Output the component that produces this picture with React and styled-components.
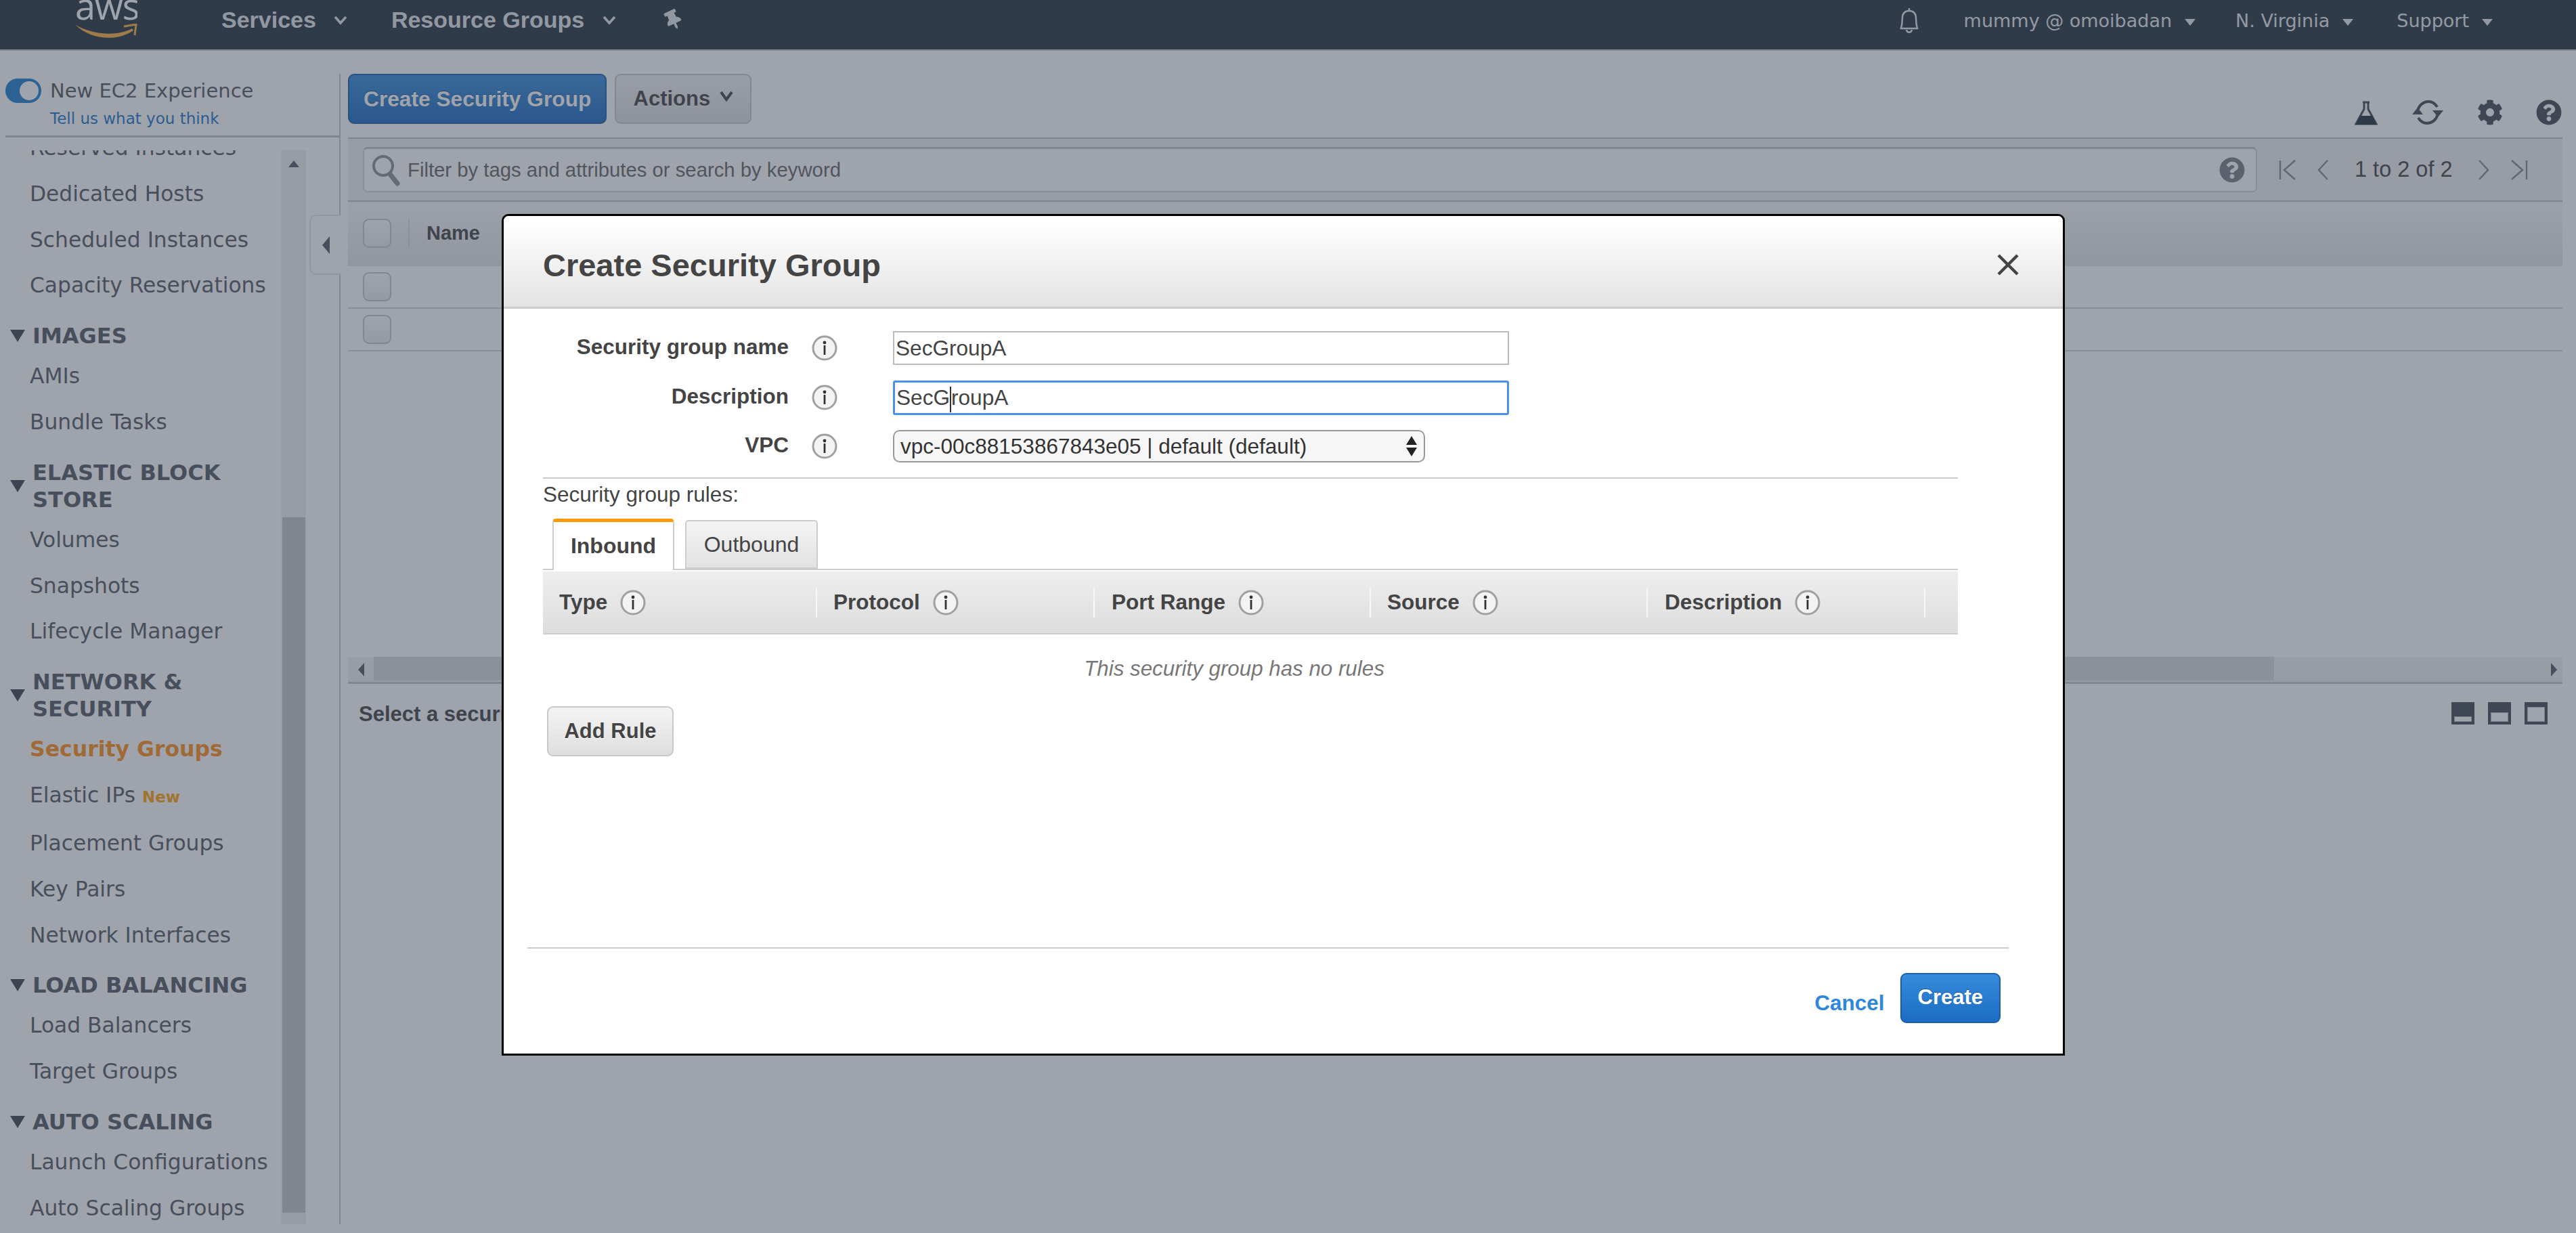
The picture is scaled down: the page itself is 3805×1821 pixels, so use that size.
import React from "react";
import styled, { createGlobalStyle } from "styled-components";
import { FaCog, FaQuestionCircle, FaThumbtack } from "react-icons/fa";

const GlobalStyle = createGlobalStyle`
html, body {
    margin : 0;
    padding : 0;
    background : #fff;
    overflow : hidden;
}
* { box-sizing : border-box; }
`;

const Page = styled.div`
    position : relative;
    width : 3805px;
    height : 1821px;
    overflow : hidden;
    font-family : "Liberation Sans", Arial, sans-serif;
    color : #444;
`;

/* top bar */
const TopBar = styled.header`
    display : flex;
    align-items : center;
    height : 75px;
    background : #263342;
    border-bottom : 2px solid #c9ccd0;
    color : #d5dbdb;
`;
const Logo = styled.div`
    display : flex;
    flex-direction : column;
    flex : none;
    width : 92px;
    height : 73px;
    margin-left : 111px;
    overflow : hidden;
`;
const LogoText = styled.span`
    display : block;
    flex : none;
    height : 70px;
    margin-top : -27px;
    margin-bottom : -8px;
    padding-right : 6px;
    font-family : "Open Sans", sans-serif;
    font-size : 54px;
    line-height : 70px;
    text-align : center;
    letter-spacing : -1px;
    color : #fff;
`;
const Smile = styled.svg`
    display : block;
    flex : none;
    width : 92px;
    height : 22px;
`;
const MainNav = styled.nav`
    display : flex;
    align-items : center;
    margin-left : 124px;
    margin-top : -14px;
`;
const MainNavItem = styled.a`
    display : flex;
    align-items : center;
    gap : ${(p) => p.$inner}px;
    margin-right : ${(p) => p.$gap}px;
    font-size : 34px;
    font-weight : bold;
    color : #e6e9ec;
`;
const PinWrap = styled.span`
    display : flex;
    color : #e6e9ec;
    font-size : 29px;
    transform : rotate(-25deg);
`;
const TopRight = styled.div`
    display : flex;
    align-items : center;
    margin-left : auto;
    margin-right : 123px;
    margin-top : -12px;
`;
const Bell = styled.svg`
    width : 36px;
    height : 40px;
    margin-right : 63px;
`;
const RightItem = styled.a`
    display : flex;
    align-items : center;
    gap : 19px;
    margin-right : ${(p) => p.$gap}px;
    font-family : "DejaVu Sans", sans-serif;
    font-size : 27px;
    color : #e8ebee;
`;
const Caret = styled.span`
    width : 0;
    height : 0;
    border-left : 8px solid transparent;
    border-right : 8px solid transparent;
    border-top : 10px solid #e8ebee;
    margin-top : 4px;
`;

/* page body */
const Body = styled.div`
    display : flex;
    height : 1733px;
`;
const SideBar = styled.aside`
    position : relative;
    flex : none;
    width : 503px;
    margin-top : 34px;
    border-right : 2px solid #c5c8cd;
    display : flex;
    flex-direction : column;
`;
const ToggleBlock = styled.div`
    height : 94px;
    margin-left : 8px;
    border-bottom : 3px solid #c5c8cd;
`;
const ToggleRow = styled.div`
    display : flex;
    align-items : center;
    gap : 13px;
    height : 50px;
    font-family : "DejaVu Sans", sans-serif;
    font-size : 29px;
    color : #545b64;
`;
const Toggle = styled.span`
    display : block;
    width : 53px;
    height : 36px;
    border-radius : 18px;
    background : #1e7fd0;
    position : relative;
    &::after {
        content : "";
        position : absolute;
        right : 4px;
        top : 4px;
        width : 28px;
        height : 28px;
        border-radius : 50%;
        background : #fff;
    }
`;
const ToggleLink = styled.a`
    display : block;
    margin-left : 66px;
    font-family : "DejaVu Sans", sans-serif;
    font-size : 23px;
    line-height : 32px;
    color : #1a77c9;
`;
const NavArea = styled.div`
    display : flex;
    flex : 1;
    min-height : 0;
    margin-top : 19px;
`;
const NavList = styled.div`
    width : 415px;
    overflow : hidden;
`;
const NavScroll = styled.div`
    margin-top : -38px;
`;
const NavItem = styled.a`
    display : flex;
    align-items : baseline;
    height : ${(p) => p.$h || 67.8}px;
    padding-left : 44px;
    line-height : 68px;
    font-family : "DejaVu Sans", sans-serif;
    font-size : ${(p) => (p.$active ? 31.5 : 31.3)}px;
    font-weight : ${(p) => (p.$active ? "bold" : "normal")};
    color : ${(p) => (p.$active ? "#ff8f1b" : "#545b64")};
`;
const NewTag = styled.span`
    margin-left : 10px;
    font-size : 23px;
    font-weight : bold;
    color : #ffa50a;
`;
const NavHead = styled.div`
    display : flex;
    align-items : center;
    gap : 11px;
    margin-top : 21px;
    margin-bottom : 5px;
    padding-left : 15px;
    font-family : "DejaVu Sans", sans-serif;
    font-size : 32px;
    font-weight : bold;
    line-height : 40px;
    color : #545b64;
`;
const HeadArrow = styled.span`
    flex : none;
    width : 0;
    height : 0;
    border-left : 11px solid transparent;
    border-right : 11px solid transparent;
    border-top : 18px solid #3d4652;
`;
const ScrollTrack = styled.div`
    position : relative;
    width : 37px;
    background : #eef3f2;
`;
const ScrollThumb = styled.div`
    position : absolute;
    left : 2px;
    right : 1px;
    top : 542px;
    bottom : 17px;
    background : #c3c7cb;
`;
const ScrollUp = styled.span`
    position : absolute;
    left : 11px;
    top : 15px;
    width : 0;
    height : 0;
    border-left : 8px solid transparent;
    border-right : 8px solid transparent;
    border-bottom : 10px solid #545b64;
`;
const Collapser = styled.div`
    position : absolute;
    right : -2px;
    top : 208px;
    display : flex;
    align-items : center;
    justify-content : center;
    width : 46px;
    height : 89px;
    background : #fff;
    border : 2px solid #e3e5e8;
    border-right : none;
    border-radius : 10px 0 0 10px;
`;
const CollapseArrow = styled.span`
    width : 0;
    height : 0;
    border-top : 13px solid transparent;
    border-bottom : 13px solid transparent;
    border-right : 11px solid #545b64;
`;

/* main content */
const Main = styled.main`
    flex : none;
    width : 3271px;
    margin-left : 11px;
`;
const ActionBar = styled.div`
    display : flex;
    align-items : flex-start;
    gap : 12px;
    height : 130px;
    padding-top : 34px;
    border-bottom : 2px solid #bfc3c8;
`;
const PrimaryButton = styled.button`
    height : 74px;
    padding : 0 ${(p) => p.$pad}px ${(p) => p.$bottom || 0}px;
    border : 2px solid #1a5fae;
    border-radius : 9px;
    background : linear-gradient(#378cdc, #1b6cc3);
    color : #fff;
    font-family : inherit;
    font-size : ${(p) => p.$size}px;
    font-weight : bold;
    text-shadow : 0 -1px 0 #14508f;
`;
const GreyButton = styled.button`
    display : inline-flex;
    align-items : center;
    gap : 14px;
    height : 74px;
    width : ${(p) => p.$w}px;
    padding : 0;
    justify-content : center;
    border : 2px solid #c9c9c9;
    border-radius : 9px;
    background : linear-gradient(#f4f4f4, #dedede);
    color : #444;
    font-family : inherit;
    font-size : 31px;
    font-weight : bold;
    text-shadow : 0 1px 0 #fff;
`;
const ActionsCaret = styled.svg`
    width : 20px;
    height : 16px;
    margin-top : -8px;
`;
const ToolIcons = styled.div`
    display : flex;
    align-items : center;
    gap : 49px;
    margin-left : auto;
    margin-right : 1px;
    margin-top : 38px;
    color : #444b57;
    font-size : 38px;
    svg { display : block; }
`;
const FilterBar = styled.div`
    display : flex;
    align-items : center;
    height : 93px;
    padding-left : 22px;
    background : #f2f2f3;
    border-bottom : 2px solid #bfc3c8;
`;
const SearchBox = styled.div`
    display : flex;
    align-items : center;
    width : 2798px;
    height : 67px;
    padding : 0 16px 0 10px;
    background : #fff;
    border : 2px solid #d4d6d9;
    border-top : 3px solid #bfc3c8;
    border-radius : 7px;
    font-size : 29.3px;
    color : #666;
`;
const GlassHolder = styled.span`
    display : flex;
    margin-right : 10px;
`;
const SearchHelp = styled.span`
    display : flex;
    margin-left : auto;
    color : #7c7f86;
    font-size : 38px;
`;
const Pager = styled.div`
    display : flex;
    align-items : center;
    gap : 30px;
    margin-left : 32px;
    font-size : 32.5px;
    color : #444;
    svg { display : block; flex : none; }
`;
const PagerText = styled.span`
    margin : 0 7px 0 8px;
`;
const TableHead = styled.div`
    display : flex;
    align-items : center;
    height : 95px;
    padding-left : 22px;
    padding-bottom : 5px;
    background : linear-gradient(#fafafa, #e4e4e6);
    border-top : 2px solid #f4f4f4;
    font-weight : bold;
    font-size : 29px;
`;
const Check = styled.span`
    flex : none;
    display : block;
    width : 42px;
    height : 43px;
    border : 2px solid #c5c8cd;
    border-radius : 9px;
    background : linear-gradient(#fff, #ececee);
`;
const HeadSep = styled.span`
    width : 2px;
    height : 43px;
    margin : 0 25px;
    background : #d8d9dc;
`;
const Row = styled.div`
    display : flex;
    align-items : center;
    height : 63px;
    padding-left : 22px;
    border-bottom : 2px solid #d4d6d9;
`;
const HScroll = styled.div`
    display : flex;
    align-items : center;
    height : 39px;
    margin-top : 452px;
    background : #eef3f2;
    border-bottom : 3px solid #c5c8cd;
`;
const HScrollLeft = styled.span`
    flex : none;
    width : 38px;
    display : flex;
    justify-content : center;
    i {
        display : block;
        width : 0;
        height : 0;
        border-top : 10px solid transparent;
        border-bottom : 10px solid transparent;
        border-right : 9px solid #545b64;
    }
`;
const HScrollThumb = styled.span`
    display : block;
    width : 2807px;
    height : 35px;
    margin-bottom : 3px;
    background : #d8d9dc;
`;
const HScrollRight = styled.span`
    margin-left : auto;
    margin-right : 8px;
    width : 0;
    height : 0;
    border-top : 10px solid transparent;
    border-bottom : 10px solid transparent;
    border-left : 9px solid #545b64;
`;
const DetailBar = styled.div`
    display : flex;
    align-items : flex-start;
    padding : 27px 22px 0 16px;
    font-size : 31px;
    font-weight : bold;
`;
const PanelIcons = styled.div`
    display : flex;
    gap : 20px;
    margin-left : auto;
`;
const PanelIcon = styled.span`
    display : flex;
    align-items : flex-end;
    justify-content : center;
    width : 34px;
    height : 33px;
    padding : 4px;
    background : #444b57;
    i {
        display : block;
        width : 100%;
        height : ${(p) => p.$h}px;
        background : #fff;
        border : 1px solid #b9bcc2;
    }
`;

/* modal */
const Scrim = styled.div`
    position : absolute;
    inset : 0;
    padding : 316px 0 0 741px;
    background : rgba(59, 67, 84, 0.49);
`;
const Modal = styled.div`
    width : 2309px;
    height : 1243px;
    background : #fff;
    border : 3px solid #000;
    border-radius : 10px 10px 0 0;
`;
const ModalHead = styled.div`
    display : flex;
    align-items : center;
    justify-content : space-between;
    height : 137px;
    padding : 10px 65px 0 58px;
    border-radius : 8px 8px 0 0;
    background : linear-gradient(#fff 5%, #e3e3e3);
    border-bottom : 3px solid #ccc;
`;
const ModalTitle = styled.h2`
    margin : 0;
    font-size : 47px;
    font-weight : bold;
    color : #444;
`;
const CloseIcon = styled.svg`
    width : 32px;
    height : 32px;
`;
const ModalBody = styled.div`
    padding : 33px 155px 0 58px;
`;
const FormRow = styled.div`
    display : flex;
    align-items : center;
    height : ${(p) => p.$h || 50}px;
    margin-bottom : ${(p) => p.$mb || 23}px;
`;
const FormLabel = styled.label`
    width : 363px;
    padding-bottom : 3px;
    text-align : right;
    font-size : 31.5px;
    font-weight : bold;
    color : #444;
`;
const InfoHolder = styled.span`
    display : flex;
    margin-left : 34px;
    margin-right : 82px;
`;
const TextBox = styled.div`
    display : flex;
    align-items : center;
    width : 910px;
    height : ${(p) => (p.$focus ? 51 : 50)}px;
    padding-left : 2px;
    border : ${(p) => (p.$focus ? "3px solid #4a90f0" : "2px solid #bbb")};
    border-radius : ${(p) => (p.$focus ? "3px" : "0")};
    font-size : 31.6px;
    color : #444;
`;
const Cursor = styled.span`
    display : inline-block;
    width : 2px;
    height : 38px;
    margin-bottom : -6px;
    background : #333;
`;
const SelectBox = styled.div`
    display : flex;
    align-items : center;
    justify-content : space-between;
    width : 786px;
    height : 48px;
    padding : 0 9px;
    border : 2px solid #999;
    border-radius : 10px;
    background : #f6f6f6;
    font-size : 31.5px;
    color : #333;
`;
const SelectArrows = styled.svg`
    width : 18px;
    height : 32px;
`;
const Divider = styled.div`
    height : 2px;
    background : #ccc;
`;
const RulesLabel = styled.div`
    margin-top : 5px;
    font-size : 31.5px;
    line-height : 36px;
    color : #444;
`;
const TabRow = styled.div`
    display : flex;
    align-items : flex-end;
    gap : 16px;
    height : 76px;
    margin-top : 18px;
    padding-left : 14px;
    border-bottom : 2px solid #ccc;
`;
const Tab = styled.div`
    display : flex;
    align-items : center;
    justify-content : center;
    width : ${(p) => p.$w}px;
    height : ${(p) => (p.$active ? 76 : 72)}px;
    margin-bottom : ${(p) => (p.$active ? -2 : 0)}px;
    border : 2px solid #ccc;
    border-bottom : ${(p) => (p.$active ? "none" : "2px solid #ccc")};
    border-top : ${(p) => (p.$active ? "5px solid #f90" : "2px solid #ccc")};
    border-radius : 5px 5px 0 0;
    background : ${(p) => (p.$active ? "#fff" : "linear-gradient(#f4f4f4, #e2e2e2)")};
    font-size : 32px;
    font-weight : ${(p) => (p.$active ? "bold" : "normal")};
    color : #444;
`;
const RuleHead = styled.div`
    display : flex;
    align-items : center;
    height : 93px;
    margin-top : 2px;
    background : linear-gradient(#eee, #ddd);
    border-bottom : 2px solid #ccc;
`;
const RuleCol = styled.div`
    display : flex;
    align-items : center;
    gap : 19px;
    width : ${(p) => p.$w}px;
    height : 44px;
    padding-left : ${(p) => p.$pad}px;
    border-right : 2px solid #f7f7f7;
    font-size : 31.5px;
    font-weight : bold;
    color : #444;
`;
const EmptyNote = styled.div`
    padding : 33px 48px 0 0;
    text-align : center;
    font-size : 31.3px;
    line-height : 36px;
    font-style : italic;
    color : #777;
`;
const AddRuleWrap = styled.div`
    margin : 37px 0 0 6px;
`;
const ModalFoot = styled.div`
    margin-left : 35px;
    width : 2188px;
`;
const FootRow = styled.div`
    display : flex;
    align-items : flex-start;
    justify-content : flex-end;
    gap : 23px;
    padding : 36px 12px 0 0;
`;
const CancelLink = styled.a`
    margin-top : 24px;
    font-size : 31.5px;
    line-height : 40px;
    font-weight : bold;
    color : #2f87dc;
`;
const FootLine = styled.div`
    height : 2px;
    margin-top : 282px;
    background : #ccc;
`;

const Chevron = ({ color = "#e6e9ec" }) => (
  <svg width="20" height="14" viewBox="0 0 20 14">
    <path d="M2 2 L10 11 L18 2" fill="none" stroke={color} strokeWidth="3.5" />
  </svg>
);

const InfoIcon = () => (
  <svg width="38" height="38" viewBox="0 0 38 38">
    <circle cx="19" cy="19" r="17" fill="#f3f3f3" stroke="#a0a0a0" strokeWidth="3" />
    <circle cx="19" cy="11" r="2.4" fill="#333" />
    <rect x="17.6" y="15" width="2.8" height="14" fill="#333" />
  </svg>
);

const SearchGlass = () => (
  <svg width="44" height="54" viewBox="0 0 44 54">
    <circle cx="18" cy="21" r="14" fill="none" stroke="#8d9096" strokeWidth="4" />
    <path d="M28 33 L39 47" stroke="#8d9096" strokeWidth="7" strokeLinecap="round" />
  </svg>
);

const Flask = () => (
  <svg width="36" height="37" viewBox="0 0 36 37">
    <path d="M13 3 H23 M15 3 V13 L3 35 H33 L21 13 V3" fill="none" stroke="#444b57" strokeWidth="3" />
    <path d="M9 23 H27 L33 36 H3 Z" fill="#232f3e" />
  </svg>
);

const Refresh = () => (
  <svg width="48" height="38" viewBox="0 0 48 38">
    <path d="M9 17 C11 8 18 3 25 3 C31 3 35 6 38 11" fill="none" stroke="#444b57" strokeWidth="4" />
    <path d="M31 16 H47 L39 26 Z" fill="#444b57" />
    <path d="M39 21 C37 30 30 35 23 35 C17 35 13 32 10 27" fill="none" stroke="#444b57" strokeWidth="4" />
    <path d="M1 22 H17 L9 12 Z" fill="#444b57" />
  </svg>
);

const PagerGlyph = ({ d, w }) => (
  <svg width={w} height="30" viewBox={`0 0 ${w} 30`}>
    <path d={d} fill="none" stroke="#888b92" strokeWidth="2.5" />
  </svg>
);

const IMAGES_ITEMS = ["AMIs", "Bundle Tasks"];
const EBS_ITEMS = ["Volumes", "Snapshots", "Lifecycle Manager"];
const LB_ITEMS = ["Load Balancers", "Target Groups"];
const AS_ITEMS = ["Launch Configurations", "Auto Scaling Groups"];
const COLS = [
  { label: "Type", w: 405, pad: 24 },
  { label: "Protocol", w: 410, pad: 24 },
  { label: "Port Range", w: 408, pad: 25 },
  { label: "Source", w: 409, pad: 24 },
  { label: "Description", w: 410, pad: 25 },
];

const App = () => {
  return (
    <Page>
      <GlobalStyle />
      <TopBar>
        <Logo>
          <LogoText>aws</LogoText>
          <Smile viewBox="0 0 92 22">
            <path d="M0 1 C18 14 60 21 84 7 L86 10 C62 27 22 24 0 1 Z" fill="#ffb040" />
            <path d="M72 4 L90 1 L88 17" fill="none" stroke="#ffb040" strokeWidth="3" />
          </Smile>
        </Logo>
        <MainNav>
          <MainNavItem $gap={65} $inner={26}>Services <Chevron /></MainNavItem>
          <MainNavItem $gap={70} $inner={27}>Resource Groups <Chevron /></MainNavItem>
          <PinWrap><FaThumbtack /></PinWrap>
        </MainNav>
        <TopRight>
          <Bell viewBox="0 0 36 40">
            <path d="M18 1 V5 M6 31 C8 24 8 20 8 15 C8 9 12 5 18 5 C24 5 28 9 28 15 C28 20 28 24 30 31 Z M14 33 C15 38 21 38 22 33" fill="none" stroke="#e8ebee" strokeWidth="2.5" />
          </Bell>
          <RightItem $gap={59}>mummy @ omoibadan <Caret /></RightItem>
          <RightItem $gap={64}>N. Virginia <Caret /></RightItem>
          <RightItem $gap={0}>Support <Caret /></RightItem>
        </TopRight>
      </TopBar>
      <Body>
        <SideBar>
          <ToggleBlock>
            <ToggleRow><Toggle />New EC2 Experience</ToggleRow>
            <ToggleLink>Tell us what you think</ToggleLink>
          </ToggleBlock>
          <NavArea>
            <NavList>
              <NavScroll>
                <NavItem>Reserved Instances</NavItem>
                <NavItem>Dedicated Hosts</NavItem>
                <NavItem>Scheduled Instances</NavItem>
                <NavItem>Capacity Reservations</NavItem>
                <NavHead><HeadArrow />IMAGES</NavHead>
                {IMAGES_ITEMS.map((t) => <NavItem key={t}>{t}</NavItem>)}
                <NavHead><HeadArrow /><span>ELASTIC BLOCK STORE</span></NavHead>
                {EBS_ITEMS.map((t) => <NavItem key={t}>{t}</NavItem>)}
                <NavHead><HeadArrow /><span>NETWORK &amp; SECURITY</span></NavHead>
                <NavItem $active>Security Groups</NavItem>
                <NavItem $h={71}>Elastic IPs<NewTag>New</NewTag></NavItem>
                <NavItem>Placement Groups</NavItem>
                <NavItem>Key Pairs</NavItem>
                <NavItem>Network Interfaces</NavItem>
                <NavHead><HeadArrow />LOAD BALANCING</NavHead>
                {LB_ITEMS.map((t) => <NavItem key={t}>{t}</NavItem>)}
                <NavHead><HeadArrow />AUTO SCALING</NavHead>
                {AS_ITEMS.map((t) => <NavItem key={t}>{t}</NavItem>)}
              </NavScroll>
            </NavList>
            <ScrollTrack>
              <ScrollUp />
              <ScrollThumb />
            </ScrollTrack>
          </NavArea>
          <Collapser><CollapseArrow /></Collapser>
        </SideBar>
        <Main>
          <ActionBar>
            <PrimaryButton $pad={21} $size={31.7}>Create Security Group</PrimaryButton>
            <GreyButton $w={202}>
              Actions
              <ActionsCaret viewBox="0 0 20 16">
                <path d="M2 2 L10 13 L18 2" fill="none" stroke="#444" strokeWidth="4" />
              </ActionsCaret>
            </GreyButton>
            <ToolIcons>
              <Flask />
              <Refresh />
              <FaCog />
              <FaQuestionCircle />
            </ToolIcons>
          </ActionBar>
          <FilterBar>
            <SearchBox>
              <GlassHolder><SearchGlass /></GlassHolder>
              Filter by tags and attributes or search by keyword
              <SearchHelp><FaQuestionCircle /></SearchHelp>
            </SearchBox>
            <Pager>
              <PagerGlyph w={26} d="M2 1 V29 M24 1 L8 15 L24 29" />
              <PagerGlyph w={18} d="M16 1 L3 15 L16 29" />
              <PagerText>1 to 2 of 2</PagerText>
              <PagerGlyph w={18} d="M2 1 L15 15 L2 29" />
              <PagerGlyph w={26} d="M24 1 V29 M2 1 L18 15 L2 29" />
            </Pager>
          </FilterBar>
          <TableHead>
            <Check />
            <HeadSep />
            Name
          </TableHead>
          <Row><Check /></Row>
          <Row><Check /></Row>
          <HScroll>
            <HScrollLeft><i /></HScrollLeft>
            <HScrollThumb />
            <HScrollRight />
          </HScroll>
          <DetailBar>
            Select a security group above
            <PanelIcons>
              <PanelIcon $h={8}><i /></PanelIcon>
              <PanelIcon $h={14}><i /></PanelIcon>
              <PanelIcon $h={22}><i /></PanelIcon>
            </PanelIcons>
          </DetailBar>
        </Main>
      </Body>
      <Scrim>
        <Modal>
          <ModalHead>
            <ModalTitle>Create Security Group</ModalTitle>
            <CloseIcon viewBox="0 0 32 32">
              <path d="M2 2 L30 30 M30 2 L2 30" stroke="#444" strokeWidth="4.5" />
            </CloseIcon>
          </ModalHead>
          <ModalBody>
            <FormRow>
              <FormLabel>Security group name</FormLabel>
              <InfoHolder><InfoIcon /></InfoHolder>
              <TextBox>SecGroupA</TextBox>
            </FormRow>
            <FormRow>
              <FormLabel>Description</FormLabel>
              <InfoHolder><InfoIcon /></InfoHolder>
              <TextBox $focus>SecG<Cursor />roupA</TextBox>
            </FormRow>
            <FormRow $h={48} $mb={22}>
              <FormLabel>VPC</FormLabel>
              <InfoHolder><InfoIcon /></InfoHolder>
              <SelectBox>
                vpc-00c88153867843e05 | default (default)
                <SelectArrows viewBox="0 0 18 32">
                  <path d="M9 1 L17 14 H1 Z M9 31 L17 18 H1 Z" fill="#222" />
                </SelectArrows>
              </SelectBox>
            </FormRow>
            <Divider />
            <RulesLabel>Security group rules:</RulesLabel>
            <TabRow>
              <Tab $active $w={180}>Inbound</Tab>
              <Tab $w={196}>Outbound</Tab>
            </TabRow>
            <RuleHead>
              {COLS.map((c) => (
                <RuleCol key={c.label} $w={c.w} $pad={c.pad}>
                  {c.label}
                  <InfoIcon />
                </RuleCol>
              ))}
            </RuleHead>
            <EmptyNote>This security group has no rules</EmptyNote>
            <AddRuleWrap>
              <GreyButton $w={187}>Add Rule</GreyButton>
            </AddRuleWrap>
          </ModalBody>
          <ModalFoot>
            <FootLine />
            <FootRow>
              <CancelLink>Cancel</CancelLink>
              <PrimaryButton $pad={24} $bottom={3} $size={31}>Create</PrimaryButton>
            </FootRow>
          </ModalFoot>
        </Modal>
      </Scrim>
    </Page>
  );
};

export default App;
